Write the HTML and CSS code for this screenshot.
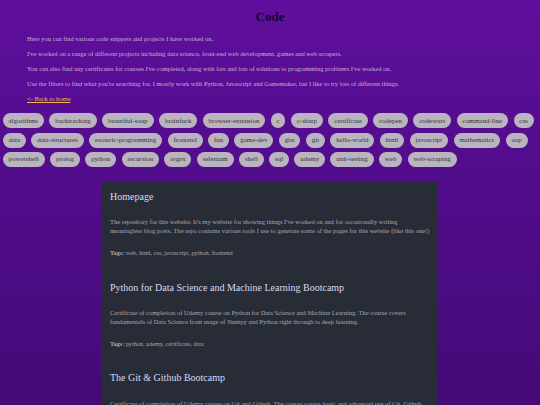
FILE: index.html
```html
<!DOCTYPE html>
<html lang="en">
<head>
    <meta charset="UTF-8">
    <meta name="viewport" content="width=device-width, initial-scale=1.0">
    <title>Code</title>
    <link rel="stylesheet" href="styles.css">
</head>
<body>
    <h1>Code</h1>
    <div class="intro">
        <p>Here you can find various code snippets and projects I have worked on.</p>
        <p>I've worked on a range of different projects including data science, front-end web development, games and web scrapers.</p>
        <p>You can also find any certificates for courses I've completed, along with lots and lots of solutions to programming problems I've worked on.</p>
        <p>Use the filters to find what you're searching for. I mostly work with Python, Javascript and Gamemaker, but I like to try lots of different things.</p>
        <p><a href="#">&lt;- Back to home</a></p>
    </div>

    <div class="tags">
        <span class="tag">algorithms</span>
        <span class="tag">backtracking</span>
        <span class="tag">beautiful-soup</span>
        <span class="tag">brainfuck</span>
        <span class="tag">browser-extension</span>
        <span class="tag">c</span>
        <span class="tag">c-sharp</span>
        <span class="tag">certificate</span>
        <span class="tag">codepen</span>
        <span class="tag">codewars</span>
        <span class="tag">command-line</span>
        <span class="tag">css</span>
        <span class="tag">data</span>
        <span class="tag">data-structures</span>
        <span class="tag">esoteric-programming</span>
        <span class="tag">frontend</span>
        <span class="tag">fun</span>
        <span class="tag">game-dev</span>
        <span class="tag">gist</span>
        <span class="tag">git</span>
        <span class="tag">hello-world</span>
        <span class="tag">html</span>
        <span class="tag">javascript</span>
        <span class="tag">mathematics</span>
        <span class="tag">oop</span>
        <span class="tag">powershell</span>
        <span class="tag">prolog</span>
        <span class="tag">python</span>
        <span class="tag">recursion</span>
        <span class="tag">regex</span>
        <span class="tag">selenium</span>
        <span class="tag">shell</span>
        <span class="tag">sql</span>
        <span class="tag">udemy</span>
        <span class="tag">unit-testing</span>
        <span class="tag">web</span>
        <span class="tag">web-scraping</span>
    </div>

    <div class="projects">
        <div class="project">
            <h2>Homepage</h2>
            <p>The repository for this website. It's my website for showing things I've worked on and for occasionally writing meaningless blog posts. The repo contains various tools I use to generate some of the pages for this website (like this one!)</p>
            <p class="project-tags"><b>Tags:</b> web, html, css, javascript, python, frontend</p>
        </div>
        <div class="project">
            <h2>Python for Data Science and Machine Learning Bootcamp</h2>
            <p>Certificate of completion of Udemy course on Python for Data Science and Machine Learning. The course covers fundamentals of Data Science from usage of Numpy and Python right through to deep learning.</p>
            <p class="project-tags"><b>Tags:</b> python, udemy, certificate, data</p>
        </div>
        <div class="project">
            <h2>The Git &amp; Github Bootcamp</h2>
            <p>Certificate of completion of Udemy course on Git and Github. The course covers basic and advanced use of Git, Github</p>
        </div>
    </div>
</body>
</html>
```

FILE: styles.css
```css
body {
    margin: 0;
    height: 405px;
    overflow: hidden;
    font-family: "Liberation Serif", serif;
    font-size: 6.5px;
    line-height: 10px;
    background: linear-gradient(#5f0f9c, #510c8c 45%, #450a76);
}

h1 {
    margin: 0;
    padding-top: 9px;
    text-align: center;
    font-size: 13px;
    line-height: 16px;
    color: #12052e;
}

.intro {
    padding: 9px 27px 0;
    color: #c9b2d8;
}

.intro p {
    margin: 0 0 5px;
}

.intro a {
    color: #f5b455;
}

.tags {
    display: flex;
    flex-wrap: wrap;
    gap: 4.3px 5.5px;
    padding: 4.3px 2.7px 0;
    font-size: 6.9px;
}

.tag {
    padding: 2.5px 5.85px;
    border-radius: 8px;
    background-color: #b9b4bd;
    color: #33333f;
}

.projects {
    width: 321px;
    height: 230px;
    margin: 15.5px auto 0;
    padding: 0 7.3px 0 8.3px;
    background-color: #282c37;
    color: #a9a9b0;
}

.project {
    padding-top: 7.5px;
}

.project h2 {
    margin: 0;
    font-size: 10px;
    line-height: 14px;
    font-weight: normal;
    color: #d4dcf2;
}

.project p {
    margin: 0;
    padding-top: 14.6px;
    line-height: 8.7px;
}

.project .project-tags {
    padding: 13.3px 0 15.2px;
    font-size: 6.2px;
}
```
